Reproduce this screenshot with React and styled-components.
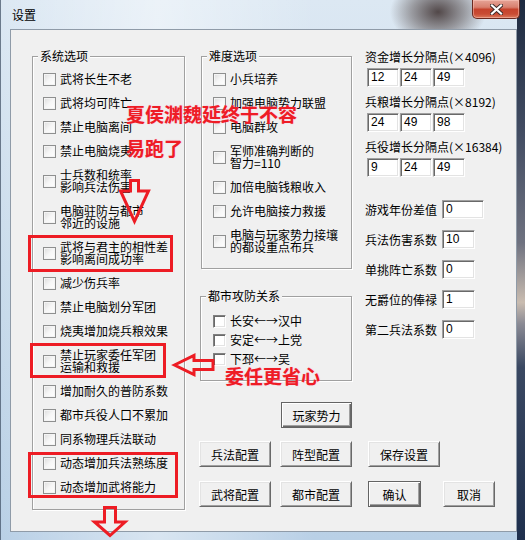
import React from 'react';
import styled, { createGlobalStyle } from 'styled-components';

const FONT = `"Noto Sans CJK SC", "Noto Sans", "DejaVu Sans", sans-serif`;

const Global = createGlobalStyle`
  html, body { margin: 0; padding: 0; background: #fff; }
  body { width: 525px; height: 540px; overflow: hidden; font-family: ${FONT}; }
  * { box-sizing: border-box; }
`;

const Window = styled.div`
  position: relative;
  width: 525px;
  height: 540px;
  display: flex;
  flex-direction: column;
  overflow: hidden;
  background:
    linear-gradient(to bottom, #1d2a40 0%, #434d63 25%, #6f7280 45%, #c9bcb0 56%, #8a8a94 60%, #3a4862 68%, #1e2f4d 100%) right top / 8px 100% no-repeat,
    radial-gradient(ellipse 48px 34px at 438px 12px, rgba(70, 58, 58, 0.92), rgba(90, 80, 80, 0.5) 55%, rgba(120, 120, 130, 0) 100%),
    linear-gradient(to right, rgba(255, 255, 255, 0) 0%, rgba(255, 255, 255, 0.45) 30%, rgba(255, 255, 255, 0) 60%),
    linear-gradient(to bottom, #dce8f3 0%, #cadcec 50%, #b9d0e6 100%);
  box-shadow: inset 1px 0 0 rgba(60, 75, 95, 0.7);
`;

const TitleBar = styled.div`
  height: 29px;
  display: flex;
  justify-content: space-between;
  align-items: flex-start;
  padding: 0 5px 0 12px;
`;

const TitleText = styled.span`
  font-size: 12px;
  line-height: 30px;
  color: #000;
`;

const CloseButton = styled.div`
  width: 48px;
  height: 19px;
  display: flex;
  align-items: center;
  justify-content: center;
  border: 1px solid #6b2a20;
  border-top: none;
  border-radius: 0 0 5px 5px;
  background: linear-gradient(to bottom, #e6a497 0%, #d8806f 40%, #c6432d 52%, #c94c34 78%, #dc7a5c 100%);
  box-shadow: inset 0 0 0 1px rgba(255, 210, 200, 0.45);
`;

const Client = styled.div`
  margin-left: 10px;
  width: 507px;
  height: 503px;
  border: 1px solid #8f9ba8;
  background: #f0f0f0;
  padding: 19px 0 0 21px;
  display: flex;
  align-items: flex-start;
`;

const GroupBox = styled.div`
  width: ${(p) => p.$w}px;
  margin-top: ${(p) => p.$mt}px;
  margin-left: ${(p) => p.$ml || 0}px;
  border: 1px solid #a0a0a0;
  box-shadow: inset 1px 1px 0 #fff, 1px 1px 0 #fff;
`;

const GroupTitle = styled.div`
  width: fit-content;
  margin: -8px 0 0 5px;
  padding: 0 2px;
  font-size: 12px;
  line-height: 14px;
  background: #f0f0f0;
  color: #000;
  white-space: nowrap;
`;

const CheckList = styled.div`
  display: flex;
  flex-direction: column;
  gap: ${(p) => p.$gap}px;
  margin-top: ${(p) => p.$mt}px;
  padding-left: ${(p) => p.$pl}px;
  padding-bottom: ${(p) => p.$pb}px;
`;

const CheckRow = styled.div`
  display: flex;
  align-items: center;
  gap: 4px;
  height: ${(p) => (p.$double ? 28 : 16)}px;
`;

const CheckBox = styled.span`
  flex: none;
  width: 13px;
  height: 13px;
  background: ${(p) => (p.$sunken ? '#fff' : 'linear-gradient(135deg, #dcdcdc 0%, #f6f6f6 50%, #fff 100%)')};
  border: 1px solid ${(p) => (p.$sunken ? '#a0a0a0' : '#8e8f8f')};
  ${(p) =>
    p.$sunken
      ? 'border-color: #808080 #fff #fff #808080; box-shadow: inset 1px 1px 0 #696969, inset -1px -1px 0 #e3e3e3;'
      : 'box-shadow: inset 0 0 0 1px #f4f4f4;'}
`;

const CheckText = styled.span`
  font-size: 12px;
  line-height: 12px;
  color: #000;
  white-space: nowrap;
`;

const MainArea = styled.div`
  margin-left: 15px;
  display: flex;
  flex-direction: column;
`;

const TopRow = styled.div`
  display: flex;
  align-items: flex-start;
`;

const MiddleCol = styled.div`
  width: 152px;
  display: flex;
  flex-direction: column;
`;

const RightCol = styled.div`
  width: 151px;
  margin-left: 13px;
  display: flex;
  flex-direction: column;
`;

const FieldLabel = styled.div`
  font-size: 12px;
  line-height: 16px;
  color: #000;
  white-space: nowrap;
`;

const InputRow = styled.div`
  display: flex;
  gap: 1px;
  margin: 3px 0 ${(p) => (p.$last ? 0 : 7)}px 2px;
`;

const TextBox = styled.div`
  width: ${(p) => p.$w}px;
  height: 19px;
  background: #fff;
  border-style: solid;
  border-width: 1px;
  border-color: #a0a0a0 #fff #fff #a0a0a0;
  box-shadow: inset 1px 1px 0 #696969, inset -1px -1px 0 #e3e3e3;
  padding-left: 3px;
  font-family: "Liberation Sans", Arial, sans-serif;
  font-size: 12px;
  line-height: 17px;
  color: #000;
`;

const ParamGrid = styled.div`
  margin-top: 23px;
  display: grid;
  grid-template-columns: 77px auto;
  row-gap: 11px;
  align-items: center;
  justify-items: start;
`;

const Button = styled.div`
  width: ${(p) => p.$w}px;
  height: 26px;
  display: flex;
  align-items: center;
  justify-content: center;
  font-size: 12px;
  color: #000;
  background: #f0f0f0;
  border: 1px solid;
  border-color: ${(p) => (p.$default ? '#646464' : '#fff #696969 #696969 #fff')};
  box-shadow: ${(p) =>
    p.$default
      ? 'inset 1px 1px 0 #fff, inset -1px -1px 0 #696969, inset -2px -2px 0 #a0a0a0'
      : 'inset 1px 1px 0 #e3e3e3, inset -1px -1px 0 #a0a0a0'};
`;

const PlayerButtonWrap = styled.div`
  align-self: flex-end;
  margin-top: 21px;
`;

const ButtonGrid = styled.div`
  margin: 13px 0 0 -1px;
  display: grid;
  grid-template-columns: 81px 88px 75px 52px;
  row-gap: 14px;
`;

const Note = styled.div`
  position: absolute;
  left: ${(p) => p.$x}px;
  top: ${(p) => p.$y}px;
  font-family: ${FONT};
  font-weight: 700;
  font-size: 19px;
  line-height: 19px;
  color: #ee1c25;
  white-space: nowrap;
  text-shadow: 0 0 1px rgba(255, 140, 190, 0.8);
`;

const RedBox = styled.div`
  position: absolute;
  left: ${(p) => p.$x}px;
  top: ${(p) => p.$y}px;
  width: ${(p) => p.$w}px;
  height: ${(p) => p.$h}px;
  border: 3px solid #ed1c24;
`;

const Overlay = styled.svg`
  position: absolute;
  left: 0;
  top: 0;
  pointer-events: none;
`;

const leftItems = [
  ['武将长生不老'],
  ['武将均可阵亡'],
  ['禁止电脑离间'],
  ['禁止电脑烧夷'],
  ['士兵数和统率', '影响兵法伤害'],
  ['电脑驻防与都市', '邻近的设施'],
  ['武将与君主的相性差', '影响离间成功率'],
  ['减少伤兵率'],
  ['禁止电脑划分军团'],
  ['烧夷增加烧兵粮效果'],
  ['禁止玩家委任军团', '运输和救援'],
  ['增加耐久的普防系数'],
  ['都市兵役人口不累加'],
  ['同系物理兵法联动'],
  ['动态增加兵法熟练度'],
  ['动态增加武将能力'],
];

const diffItems = [
  ['小兵培养'],
  ['加强电脑势力联盟'],
  ['电脑群攻'],
  ['军师准确判断的', '智力=110'],
  ['加倍电脑钱粮收入'],
  ['允许电脑接力救援'],
  ['电脑与玩家势力接壤', '的都设重点布兵'],
];

const cityItems = [['长安←→汉中'], ['安定←→上党'], ['下邳←→吴']];

const growth = [
  { label: '资金增长分隔点(×4096)', vals: ['12', '24', '49'] },
  { label: '兵粮增长分隔点(×8192)', vals: ['24', '49', '98'] },
  { label: '兵役增长分隔点(×16384)', vals: ['9', '24', '49'] },
];

const params = [
  ['游戏年份差值', '0', 42],
  ['兵法伤害系数', '10', 33],
  ['单挑阵亡系数', '0', 33],
  ['无爵位的俸禄', '1', 33],
  ['第二兵法系数', '0', 33],
];

const buttonRows = [
  [['兵法配置', 72], ['阵型配置', 72], ['保存设置', 72]],
  [['武将配置', 72], ['都市配置', 72], ['确认', 53, true], ['取消', 52]],
];

function Checks({ items, sunken, ...rest }) {
  return (
    <CheckList {...rest}>
      {items.map((lines) => (
        <CheckRow key={lines[0]} $double={lines.length > 1}>
          <CheckBox $sunken={sunken} />
          <CheckText>
            {lines.map((l, i) => (
              <React.Fragment key={l}>
                {i > 0 && <br />}
                {l}
              </React.Fragment>
            ))}
          </CheckText>
        </CheckRow>
      ))}
    </CheckList>
  );
}

export default function App() {
  return (
    <>
      <Global />
      <Window>
        <TitleBar>
          <TitleText>设置</TitleText>
          <CloseButton>
            <svg width="13" height="11" viewBox="0 0 13 11">
              <path d="M2 1.5 L11 9.5 M11 1.5 L2 9.5" stroke="#3b2a28" strokeWidth="4" strokeLinecap="square" />
              <path d="M2 1.5 L11 9.5 M11 1.5 L2 9.5" stroke="#fff" strokeWidth="2.2" strokeLinecap="square" />
            </svg>
          </CloseButton>
        </TitleBar>
        <Client>
          <GroupBox $w={153} $mt={7}>
            <GroupTitle>系统选项</GroupTitle>
            <Checks items={leftItems} $gap={8} $mt={8} $pl={10} $pb={14} />
          </GroupBox>
          <MainArea>
            <TopRow>
              <MiddleCol>
                <GroupBox $w={151} $mt={7} $ml={1}>
                  <GroupTitle>难度选项</GroupTitle>
                  <Checks items={diffItems} $gap={8} $mt={8} $pl={11} $pb={13} />
                </GroupBox>
                <GroupBox $w={152} $mt={27}>
                  <GroupTitle>都市攻防关系</GroupTitle>
                  <Checks items={cityItems} sunken $gap={3} $mt={10} $pl={12} $pb={13} />
                </GroupBox>
                <PlayerButtonWrap>
                  <Button $w={71} $default>玩家势力</Button>
                </PlayerButtonWrap>
              </MiddleCol>
              <RightCol>
                {growth.map((g, i) => (
                  <React.Fragment key={g.label}>
                    <FieldLabel>{g.label}</FieldLabel>
                    <InputRow $last={i === growth.length - 1}>
                      {g.vals.map((v, j) => (
                        <TextBox key={j} $w={32}>{v}</TextBox>
                      ))}
                    </InputRow>
                  </React.Fragment>
                ))}
                <ParamGrid>
                  {params.map(([label, val, w]) => (
                    <React.Fragment key={label}>
                      <FieldLabel>{label}</FieldLabel>
                      <TextBox $w={w}>{val}</TextBox>
                    </React.Fragment>
                  ))}
                </ParamGrid>
              </RightCol>
            </TopRow>
            <ButtonGrid>
              {buttonRows.map((row) =>
                row.map(([label, w, def]) => (
                  <Button key={label} $w={w} $default={def}>{label}</Button>
                ))
              ).map((cells, r) => (
                <React.Fragment key={r}>
                  {cells}
                  {cells.length < 4 && <span />}
                </React.Fragment>
              ))}
            </ButtonGrid>
          </MainArea>
        </Client>

        <RedBox $x={28} $y={235} $w={145} $h={37} />
        <RedBox $x={30} $y={343} $w={136} $h={35} />
        <RedBox $x={28} $y={452} $w={150} $h={46} />
        <Note $x={126} $y={104}>夏侯渊魏延终于不容</Note>
        <Note $x={126} $y={138}>易跑了</Note>
        <Note $x={225} $y={366}>委任更省心</Note>
        <Overlay width="525" height="540" viewBox="0 0 525 540">
          <g fill="none" stroke="#ed1c24" strokeWidth="3">
            <polygon points="130.5,180.5 138.5,180.5 138.5,191 148.5,191 134.5,221.5 120.5,191 130.5,191" />
            <polygon points="174.5,365 194,355.5 194,360.5 213,360.5 213,369.5 194,369.5 194,374.5" />
            <polygon points="104.5,507.5 115.5,507.5 115.5,522 125,522 110,535.5 94.5,522 104.5,522" />
          </g>
        </Overlay>
      </Window>
    </>
  );
}
